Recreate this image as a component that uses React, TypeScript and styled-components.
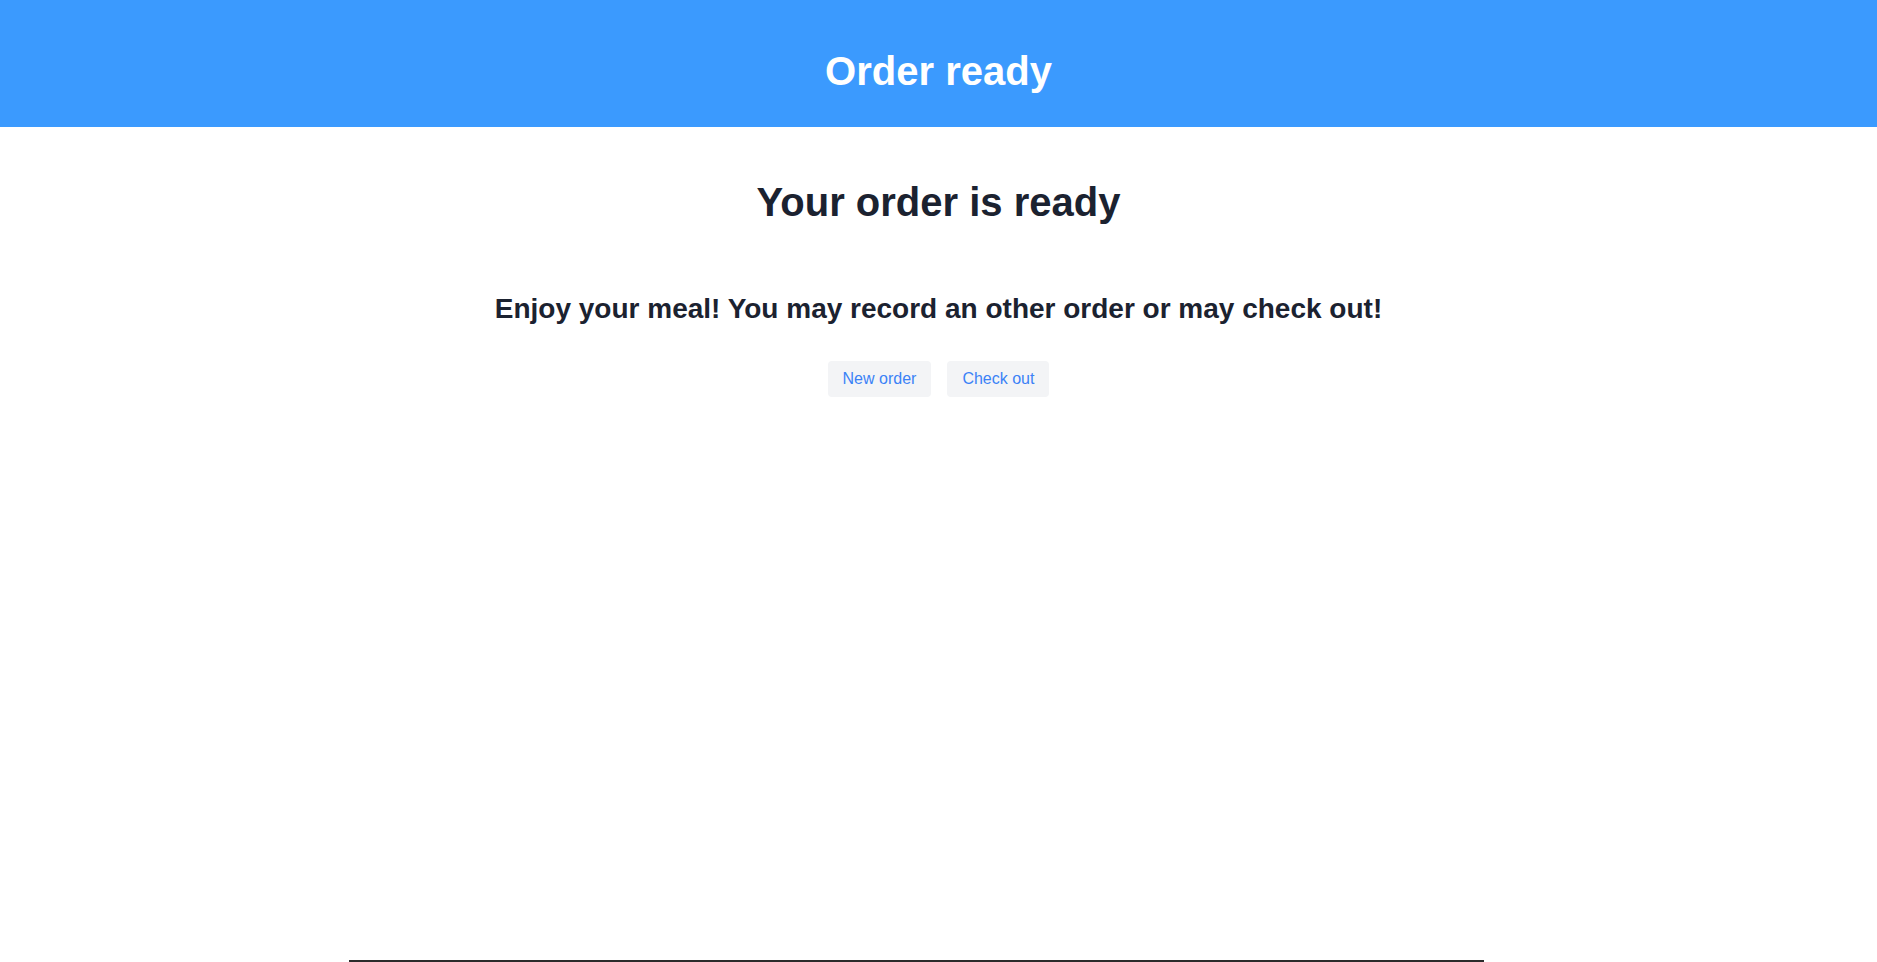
import React from 'react'
import styled, { createGlobalStyle } from 'styled-components'

const GlobalStyle = createGlobalStyle`
  html, body {
    margin: 0;
    padding: 0;
    background: #fff;
    font-family: 'Liberation Sans', Arial, sans-serif;
  }
`

const App = () => {
  return (
    <>
      <GlobalStyle />
      <Page>
        <Header>
          <h1>Order ready</h1>
        </Header>
        <Main>
          <Title>Your order is ready</Title>
          <Message>Enjoy your meal! You may record an other order or may check out!</Message>
          <Actions>
            <ActionButton type="button">New order</ActionButton>
            <ActionButton type="button">Check out</ActionButton>
          </Actions>
        </Main>
        <Footer />
      </Page>
    </>
  )
}

export default App

const Page = styled.div`
  display: flex;
  flex-direction: column;
  min-height: 100vh;
`

const Header = styled.header`
  background-color: #3b9afe;
  padding: 47px 0 32px;
  text-align: center;

  h1 {
    margin: 0;
    color: #fff;
    font-size: 40px;
    line-height: 48px;
    font-weight: 700;
  }
`

const Main = styled.main`
  flex: 1;
  display: flex;
  flex-direction: column;
  align-items: center;
  padding-top: 51px;
  color: #1b2230;
`

const Title = styled.h2`
  margin: 0;
  font-size: 40px;
  line-height: 48px;
  font-weight: 700;
`

const Message = styled.h3`
  margin: 66px 0 0;
  font-size: 28px;
  line-height: 34px;
  font-weight: 700;
`

const Actions = styled.div`
  display: flex;
  gap: 16px;
  margin-top: 35px;
`

const ActionButton = styled.button`
  height: 36px;
  padding: 0 15px;
  border: none;
  border-radius: 4px;
  background-color: #f3f4f6;
  color: #3b82f6;
  font-family: 'Liberation Sans', Arial, sans-serif;
  font-size: 16px;
  cursor: pointer;
`

const Footer = styled.footer`
  height: 0;
  width: 1135px;
  margin-left: 349px;
  border-top: 2px solid #2b2b2b;
`
